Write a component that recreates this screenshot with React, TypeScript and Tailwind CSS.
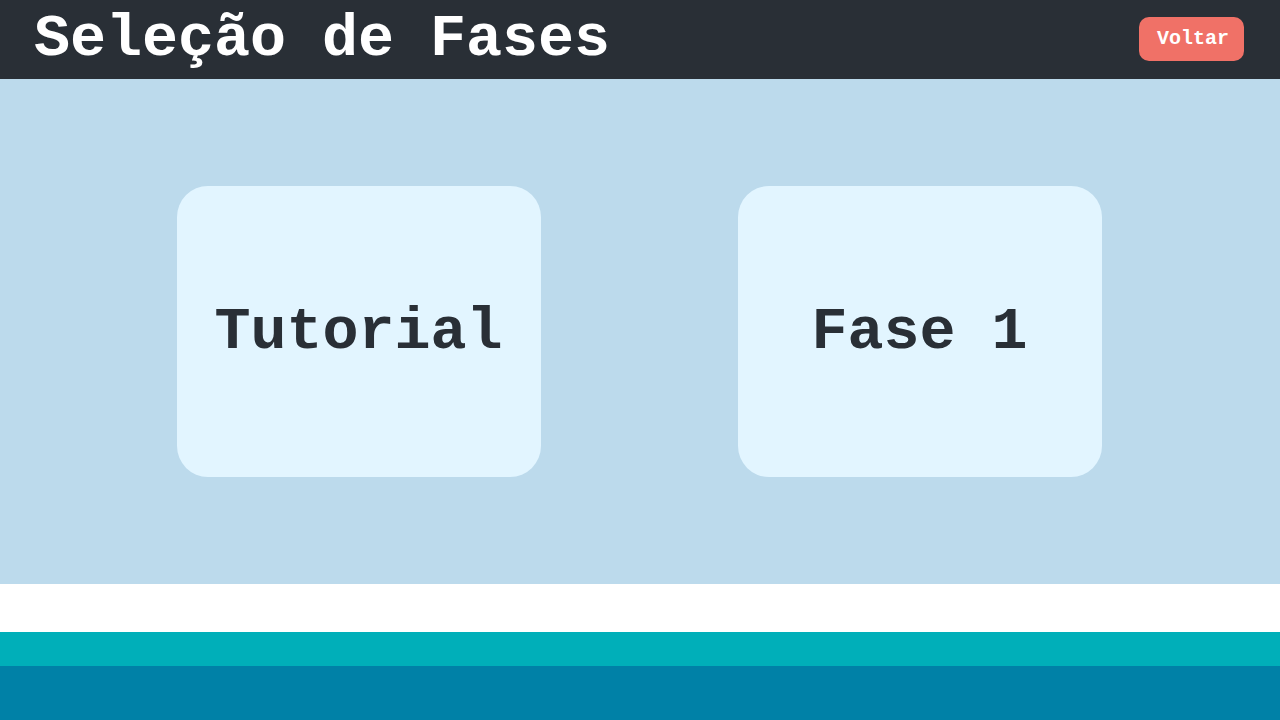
function StageButton({ name }: { name: string }) {
  return (
    <button
      type="button"
      className="h-[291px] w-[364px] cursor-pointer justify-self-center rounded-[31px] bg-[#e2f5ff] text-[60px] leading-[60px]"
    >
      {name}
    </button>
  );
}

export default function App() {
  return (
    <div className="flex min-h-screen flex-col bg-[#0081a7] font-['Liberation_Mono',monospace] font-bold text-[#292f36]">
      <header className="flex items-center justify-between bg-[#292f36] pt-[17px] pr-9 pb-[18px] pl-[34px] text-white">
        <h1 className="text-[60px] leading-11">Seleção de Fases</h1>
        <button
          type="button"
          className="h-11 cursor-pointer rounded-[10px] bg-[#f07167] pr-[15px] pl-[18px] text-xl leading-5"
        >
          Voltar
        </button>
      </header>
      <main className="grid grow grid-cols-2 items-center bg-[#bcdaec] pr-20 pl-[78px]">
        <StageButton name="Tutorial" />
        <StageButton name="Fase 1" />
      </main>
      <footer>
        <div className="h-12 bg-white" />
        <div className="h-[34px] bg-[#00afb9]" />
        <div className="h-[54px] bg-[#0081a7]" />
      </footer>
    </div>
  );
}
